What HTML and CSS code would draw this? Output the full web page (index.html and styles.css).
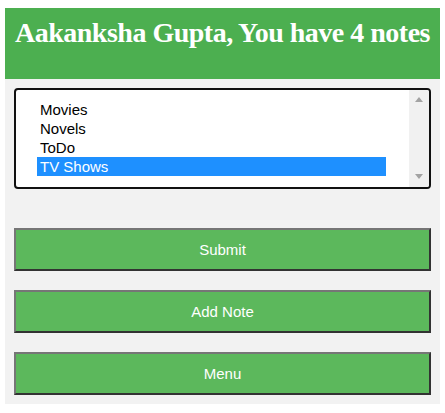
FILE: index.html
```html
<!DOCTYPE html>
<html>
<head>
<meta charset="utf-8">
<link rel="stylesheet" href="styles.css">
</head>
<body>
<div class="page">
  <header class="header">
    <h1 class="title">Aakanksha Gupta, You have 4 notes</h1>
  </header>
  <main class="main">
    <div class="listbox">
      <ul class="options">
        <li class="option">Movies</li>
        <li class="option">Novels</li>
        <li class="option">ToDo</li>
        <li class="option selected">TV Shows</li>
      </ul>
      <div class="scrollbar">
        <span class="arrow up"></span>
        <span class="arrow down"></span>
      </div>
    </div>
    <div class="buttons">
      <button class="btn">Submit</button>
      <button class="btn">Add Note</button>
      <button class="btn">Menu</button>
    </div>
  </main>
</div>
</body>
</html>
```
FILE: styles.css
```css
html, body {
  margin: 0;
  padding: 0;
  background: #ffffff;
}
body {
  padding: 8px 5px 9px 5px;
}
.page {
  display: flex;
  flex-direction: column;
}
.header {
  background: #4caf50;
  height: 71px;
  box-sizing: border-box;
  padding-top: 9px;
}
.title {
  margin: 0;
  font-family: "Liberation Serif", "Times New Roman", serif;
  font-weight: bold;
  font-size: 28px;
  line-height: 32px;
  letter-spacing: -0.5px;
  color: #ffffff;
  text-align: center;
  white-space: nowrap;
}
.main {
  background: #f2f2f2;
  padding: 9px 9px 9px 9px;
  display: flex;
  flex-direction: column;
}
.listbox {
  display: flex;
  height: 101px;
  box-sizing: border-box;
  border: 2px solid #111111;
  border-radius: 4px;
  background: #ffffff;
  overflow: hidden;
}
.options {
  list-style: none;
  margin: 0;
  padding: 10px 23px 11px 21px;
  flex: 1;
  font-family: "Liberation Sans", Arial, sans-serif;
  font-size: 15px;
  color: #000000;
}
.option {
  height: 19px;
  line-height: 19px;
  padding: 0 3px;
}
.option.selected {
  background: #1e90ff;
  color: #ffffff;
}
.scrollbar {
  width: 20px;
  background: #f1f1f1;
  display: flex;
  flex-direction: column;
  justify-content: space-between;
  align-items: center;
  padding: 7px 0 8px 0;
}
.arrow {
  width: 0;
  height: 0;
  border-left: 4.5px solid transparent;
  border-right: 4.5px solid transparent;
}
.arrow.up {
  border-bottom: 5px solid #a3a3a3;
}
.arrow.down {
  border-top: 5px solid #a3a3a3;
}
.buttons {
  margin-top: 39px;
  display: flex;
  flex-direction: column;
  gap: 19px;
}
.btn {
  height: 43px;
  box-sizing: border-box;
  margin: 0;
  background: #5cb85c;
  color: #ffffff;
  font-family: "Liberation Sans", Arial, sans-serif;
  font-size: 15px;
  border-style: solid;
  border-width: 2px;
  border-color: #767676 #333333 #333333 #767676;
  border-radius: 0;
  padding: 0;
}
```
